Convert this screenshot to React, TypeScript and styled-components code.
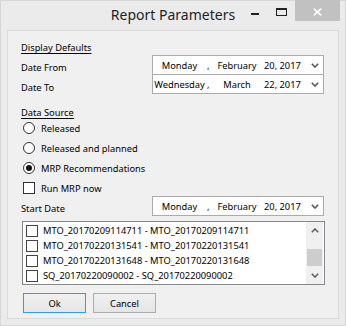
import React from 'react';
import styled, { createGlobalStyle } from 'styled-components';

const GlobalStyle = createGlobalStyle`
  html, body {
    margin: 0;
    padding: 0;
    background: #ebebeb;
  }
  body {
    font-family: "Noto Sans", "Liberation Sans", sans-serif;
    color: #000;
  }
`;

const sources = ['Released', 'Released and planned', 'MRP Recommendations'];

const orders = [
  'MTO_20170209114711 - MTO_20170209114711',
  'MTO_20170220131541 - MTO_20170220131541',
  'MTO_20170220131648 - MTO_20170220131648',
  'SQ_20170220090002 - SQ_20170220090002',
];

const Chevron: React.FC<{ up?: boolean; color?: string }> = ({ up, color = '#555' }) => (
  <svg width="8" height="5" viewBox="0 0 8 5">
    <path
      d={up ? 'M0.8 4.2 L4 1 L7.2 4.2' : 'M0.8 0.8 L4 4 L7.2 0.8'}
      fill="none"
      stroke={color}
      strokeWidth="1.6"
    />
  </svg>
);

const DatePicker: React.FC<{ day: string; month: string; rest: string; $overlap?: boolean }> = ({
  day,
  month,
  rest,
  $overlap,
}) => (
  <Picker $overlap={$overlap}>
    <DayField>{day}</DayField>
    <Sep>,</Sep>
    <MonthField>{month}</MonthField>
    <Rest>{rest}</Rest>
    <Drop>
      <Chevron />
    </Drop>
  </Picker>
);

export default function App() {
  return (
    <>
      <GlobalStyle />
      <Window>
        <TitleBar>
          <span />
          <Title>Report Parameters</Title>
          <Controls>
            <MinIcon />
            <MaxIcon />
            <CloseButton>
              <svg width="9" height="8" viewBox="0 0 9 8">
                <path d="M0.8 0.6 L8.2 7.4 M8.2 0.6 L0.8 7.4" stroke="#fff" strokeWidth="1.6" />
              </svg>
            </CloseButton>
          </Controls>
        </TitleBar>

        <Panel>
          <SectionTitle>Display Defaults</SectionTitle>
          <FieldGrid $top={1}>
            <FieldLabel>Date From</FieldLabel>
            <DatePicker day="Monday" month="February" rest="20, 2017" />
            <FieldLabel>Date To</FieldLabel>
            <DatePicker day="Wednesday" month="March" rest="22, 2017" $overlap />
          </FieldGrid>

          <SectionTitle $top={11}>Data Source</SectionTitle>
          <Options>
            {sources.map((s, i) => (
              <OptionRow key={s}>
                <Radio>{i === 2 && <RadioDot />}</Radio>
                <OptionText>{s}</OptionText>
              </OptionRow>
            ))}
            <OptionRow>
              <Check />
              <OptionText>Run MRP now</OptionText>
            </OptionRow>
          </Options>

          <FieldGrid $top={-2}>
            <FieldLabel>Start Date</FieldLabel>
            <DatePicker day="Monday" month="February" rest="20, 2017" />
          </FieldGrid>

          <ListBox>
            <ListItems>
              {orders.map(o => (
                <ListRow key={o}>
                  <Check $small />
                  <ListText>{o}</ListText>
                </ListRow>
              ))}
            </ListItems>
            <ScrollBar>
              <ScrollArrow>
                <Chevron up color="#606060" />
              </ScrollArrow>
              <Track>
                <Thumb />
              </Track>
              <ScrollArrow>
                <Chevron color="#606060" />
              </ScrollArrow>
            </ScrollBar>
          </ListBox>

          <ButtonRow>
            <Button $primary>Ok</Button>
            <Button>Cancel</Button>
          </ButtonRow>
        </Panel>
      </Window>
    </>
  );
}

const Window = styled.div`
  width: 346px;
  height: 326px;
  box-sizing: border-box;
  border: 1px solid #d6d6d6;
  background: #ebebeb;
  display: flex;
  flex-direction: column;
`;

const TitleBar = styled.div`
  height: 29px;
  flex: none;
  display: grid;
  grid-template-columns: 1fr auto 1fr;
`;

const Title = styled.div`
  font-size: 14px;
  line-height: 28px;
  color: #1f1f1f;
  white-space: nowrap;
`;

const Controls = styled.div`
  justify-self: end;
  display: flex;
  align-items: flex-start;
  margin-right: 5px;
  margin-top: -1px;
`;

const MinIcon = styled.div`
  width: 8px;
  height: 2px;
  background: #222;
  margin-top: 13px;
  margin-right: 17px;
`;

const MaxIcon = styled.div`
  width: 11px;
  height: 8px;
  box-sizing: border-box;
  border: 1px solid #222;
  border-top-width: 2px;
  margin-top: 8px;
  margin-right: 8px;
`;

const CloseButton = styled.div`
  width: 45px;
  height: 21px;
  background: #c1c1c1;
  display: flex;
  align-items: center;
  justify-content: center;
  padding-top: 2px;
  box-sizing: border-box;
`;

const Panel = styled.div`
  flex: 1;
  margin: 0 6px 6px 6px;
  border: 1px solid #dadada;
  background: #f0f0f0;
  padding: 10px 13px 0 13px;
  display: flex;
  flex-direction: column;
  align-items: flex-start;
  font-size: 9.3px;
`;

const SectionTitle = styled.div<{ $top?: number }>`
  line-height: 13px;
  margin-top: ${p => p.$top ?? 0}px;
  text-decoration: underline;
  text-underline-offset: 2px;
  white-space: nowrap;
`;

const FieldGrid = styled.div<{ $top?: number }>`
  display: grid;
  grid-template-columns: 131px 172px;
  margin-top: ${p => p.$top ?? 0}px;
`;

const FieldLabel = styled.div`
  line-height: 15px;
  padding-top: 5px;
  white-space: nowrap;
`;

const Picker = styled.div<{ $overlap?: boolean }>`
  height: 20px;
  box-sizing: border-box;
  border: 1px solid #ababab;
  background: #fff;
  display: flex;
  align-items: center;
  white-space: nowrap;
  margin-top: ${p => (p.$overlap ? -1 : 0)}px;
`;

const DayField = styled.span`
  width: 53px;
  text-align: center;
`;

const Sep = styled.span`
  width: 4px;
  padding-left: 1px;
`;

const MonthField = styled.span`
  width: 52px;
  text-align: center;
`;

const Rest = styled.span`
  margin-left: 1px;
`;

const Drop = styled.span`
  margin-left: auto;
  margin-right: 4px;
  display: flex;
`;

const Options = styled.div`
  margin-top: -1px;
  display: flex;
  flex-direction: column;
`;

const OptionRow = styled.div`
  height: 20px;
  display: flex;
  align-items: center;
  padding-left: 2px;
`;

const OptionText = styled.span`
  margin-left: 6px;
  white-space: nowrap;
`;

const Radio = styled.span`
  width: 12px;
  height: 12px;
  box-sizing: border-box;
  border: 1px solid #333;
  border-radius: 50%;
  background: #fff;
  display: flex;
  align-items: center;
  justify-content: center;
`;

const RadioDot = styled.span`
  width: 6px;
  height: 6px;
  border-radius: 50%;
  background: #111;
`;

const Check = styled.span<{ $small?: boolean }>`
  width: 12px;
  height: 12px;
  box-sizing: border-box;
  border: 1px solid ${p => (p.$small ? '#444' : '#333')};
  background: #fff;
  flex: none;
`;

const ListBox = styled.div`
  margin-top: 5px;
  margin-left: 1px;
  width: 303px;
  height: 64px;
  box-sizing: border-box;
  border: 1px solid #828790;
  background: #fff;
  display: flex;
`;

const ListItems = styled.div`
  flex: 1;
  padding: 1px 0 0 3px;
  display: flex;
  flex-direction: column;
`;

const ListRow = styled.div`
  height: 15px;
  display: flex;
  align-items: center;
`;

const ListText = styled.span`
  margin-left: 5px;
  white-space: nowrap;
`;

const ScrollBar = styled.div`
  width: 17px;
  margin-right: 1px;
  background: #f0f0f0;
  display: flex;
  flex-direction: column;
`;

const ScrollArrow = styled.div`
  height: 17px;
  display: flex;
  align-items: center;
  justify-content: center;
`;

const Track = styled.div`
  flex: 1;
  padding-top: 10px;
`;

const Thumb = styled.div`
  height: 17px;
  margin: 0 1px;
  background: #cdcdcd;
`;

const ButtonRow = styled.div`
  margin-top: 8px;
  margin-left: 2px;
  display: flex;
  gap: 7px;
`;

const Button = styled.div<{ $primary?: boolean }>`
  width: 63px;
  height: 20px;
  box-sizing: border-box;
  border: 1px solid ${p => (p.$primary ? '#3399ff' : '#adadad')};
  background: linear-gradient(#f0f0f0, #e5e5e5);
  display: flex;
  align-items: center;
  justify-content: center;
`;
